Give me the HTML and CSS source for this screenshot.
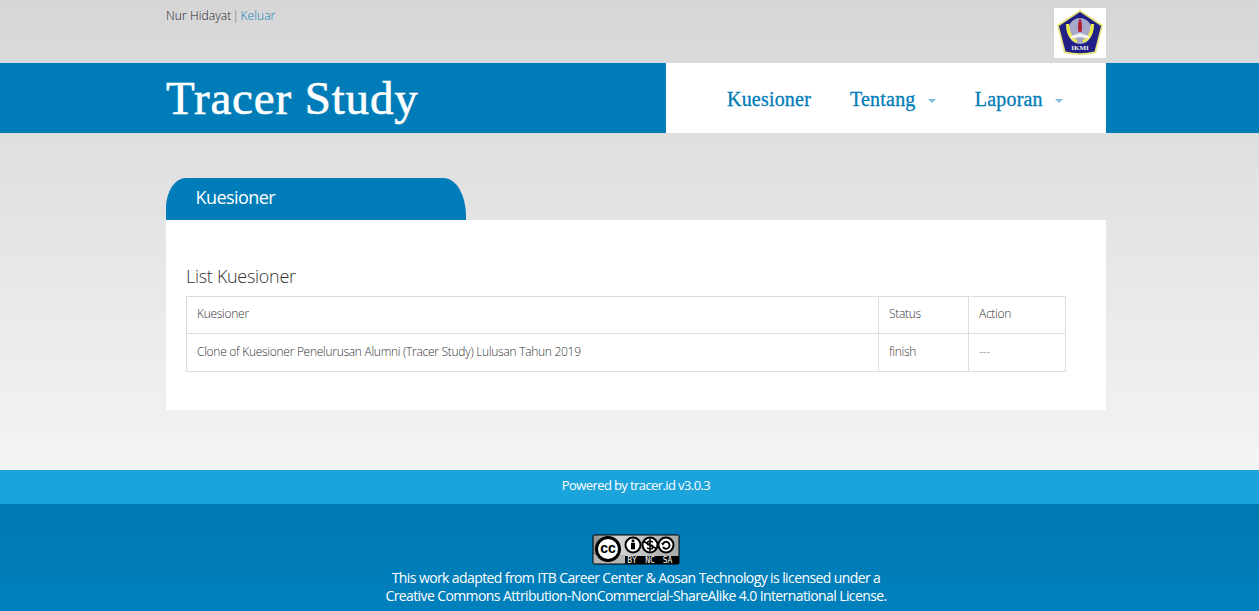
FILE: index.html
```html
<!DOCTYPE html>
<html lang="id">

<head>
  <meta charset="UTF-8" />
  <meta name="viewport" content="width=device-width, initial-scale=1.0" />
  <title>Tracer Study</title>
  <link rel="stylesheet" href="styles.css">
</head>

<body>
  <div class="top">
    <div class="wrap top-inner">
      <div class="user">Nur Hidayat <span class="sep">|</span> <a href="#">Keluar</a></div>
      <div class="logo">
        <svg width="50" height="48" viewBox="0 0 50 48">
          <path d="M25 1 L48 16 L41 44 Q25 48 9 44 L2 16 Z" fill="#e6e27a" />
          <path d="M25 3 L46 17 L39.500 42.500 Q25 46 10.500 42.500 L4 17 Z" fill="#1f1f86" />
          <ellipse cx="25" cy="22" rx="12" ry="13" fill="#a6a8cc" />
          <path d="M11 15 Q11 30 22 34 L22 31 Q15 27 14 15 Z M39 15 Q39 30 28 34 L28 31 Q35 27 36 15 Z" fill="#eceb4c" />
          <path d="M25 9 Q28 14 26.500 23 L23.500 23 Q22 14 25 9 Z" fill="#b3202e" />
          <path d="M16 27 L25 24 L34 27 L34 30 L25 28 L16 30 Z" fill="#f2f2f2" />
          <text x="25" y="41" class="logo-name">IKMI</text>
        </svg>
      </div>
    </div>
  </div>

  <div class="band">
    <div class="wrap band-inner">
      <div class="brand">Tracer Study</div>
      <nav class="nav">
        <a href="#">Kuesioner</a>
        <a href="#">Tentang <span class="caret"></span></a>
        <a href="#">Laporan <span class="caret"></span></a>
      </nav>
    </div>
  </div>

  <div class="wrap content">
    <div class="tab">Kuesioner</div>
    <div class="panel">
      <h2>List Kuesioner</h2>
      <table>
        <tr class="head">
          <td class="c1">Kuesioner</td>
          <td class="c2">Status</td>
          <td class="c3">Action</td>
        </tr>
        <tr class="row">
          <td>Clone of Kuesioner Penelurusan Alumni (Tracer Study) Lulusan Tahun 2019</td>
          <td>finish</td>
          <td class="none">---</td>
        </tr>
      </table>
    </div>
  </div>

  <div class="powered">Powered by tracer.id v3.0.3</div>

  <footer class="foot">
    <svg class="cc" width="88" height="31" viewBox="0 0 88 31">
      <defs>
        <linearGradient id="ccGrey" x1="0" x2="1" y1="0" y2="0">
          <stop offset="0" stop-color="#8f918f" />
          <stop offset="0.3" stop-color="#d2d4d2" />
          <stop offset="1" stop-color="#a8aaa8" />
        </linearGradient>
      </defs>
      <rect x="0.5" y="0.5" width="87" height="30" rx="2" fill="#000" />
      <rect x="1.5" y="1.5" width="85" height="20.500" fill="url(#ccGrey)" />
      <path d="M1.500 21 H33 V29.500 H1.500 Z" fill="#b4b6b4" />
      <circle cx="16" cy="15" r="11.500" fill="#fff" stroke="#000" stroke-width="3" />
      <text x="16" y="19" class="cc-mark">cc</text>
      <circle cx="41" cy="11" r="7.500" fill="#fff" stroke="#000" stroke-width="2" />
      <circle cx="41" cy="6.800" r="1.500" fill="#000" />
      <rect x="39" y="8.800" width="4" height="6.500" fill="#000" />
      <circle cx="58" cy="11" r="7.500" fill="#fff" stroke="#000" stroke-width="2" />
      <path d="M61 8 Q56 6 55 9 Q55 11 58 11 Q61 11 61 13.500 Q60 16 55 14 M58 4.500 V17.500 M51 7 L65 15" fill="none" stroke="#000" stroke-width="1.500" />
      <circle cx="74" cy="11" r="7.500" fill="#fff" stroke="#000" stroke-width="2" />
      <path d="M70.800 10 A3.500 3.500 0 1 1 71 13" fill="none" stroke="#000" stroke-width="1.800" />
      <path d="M69 9 L72.800 9 L70.800 11.800 Z" fill="#000" />
      <text x="40" y="28.700" class="cc-tag">BY</text>
      <text x="58" y="28.700" class="cc-tag">NC</text>
      <text x="75.500" y="28.700" class="cc-tag">SA</text>
    </svg>
    <p>This work adapted from ITB Career Center &amp; Aosan Technology is licensed under a<br>
      Creative Commons Attribution-NonCommercial-ShareAlike 4.0 International License.</p>
  </footer>
</body>

</html>
```

FILE: styles.css
```css
html,
body {
  margin: 0;
  padding: 0;
}

body {
  background: linear-gradient(#d6d6d6, #f4f4f4 470px);
  font-family: 'Open Sans', sans-serif;
  font-weight: 300;
  color: #333;
  overflow: hidden;
}

a {
  text-decoration: none;
}

.wrap {
  width: 940px;
  margin-left: 166px;
}

.top {
  height: 63px;
}

.top-inner {
  display: flex;
  justify-content: space-between;
}

.user {
  font-size: 12px;
  letter-spacing: 0.1px;
  padding-top: 7px;
  line-height: 17px;
  color: #222;
}

.user a {
  color: #0b80b8;
}

.sep {
  color: #666;
  margin: 0 -2px;
}

.logo {
  width: 52px;
  height: 50px;
  margin-top: 8px;
  background: #fff;
  display: flex;
  align-items: center;
  justify-content: center;
}

.logo-name {
  font-family: 'Liberation Serif', serif;
  font-size: 7px;
  font-weight: 700;
  fill: #f2f2f2;
  text-anchor: middle;
}

.band {
  background: #007db8;
  height: 70px;
}

.band-inner {
  display: flex;
  height: 70px;
}

.brand {
  width: 500px;
  color: #fff;
  font-family: 'Liberation Serif', serif;
  font-size: 47px;
  line-height: 70px;
  letter-spacing: 0.85px;
  -webkit-text-stroke: 0.6px #fff;
}

.nav {
  width: 440px;
  background: #fff;
  display: flex;
  gap: 39px;
  padding-left: 61px;
  box-sizing: border-box;
}

.nav a {
  color: #007db8;
  font-family: 'Liberation Serif', serif;
  font-size: 20px;
  line-height: 73px;
  letter-spacing: 0.2px;
  -webkit-text-stroke: 0.3px #007db8;
}

.caret {
  display: inline-block;
  width: 0;
  height: 0;
  margin-left: 7px;
  vertical-align: middle;
  border-left: 4px solid transparent;
  border-right: 4px solid transparent;
  border-top: 4px solid #7fbedc;
}

.content {
  padding-top: 45px;
  height: 292px;
}

.tab {
  width: 270.5px;
  height: 42px;
  padding-left: 29.5px;
  background: #007db8;
  border-radius: 20px 22px 0 0 / 30px 38px 0 0;
  color: #fff;
  font-size: 18px;
  font-weight: 400;
  letter-spacing: -0.55px;
  line-height: 39px;
}

.panel {
  background: #fff;
  height: 190px;
  padding: 44px 20px 0;
  box-sizing: border-box;
}

h2 {
  margin: 0 0 8px;
  font-size: 18px;
  font-weight: 300;
  line-height: 24px;
  letter-spacing: -0.3px;
  color: #333;
}

table {
  width: 880px;
  border-collapse: collapse;
  table-layout: fixed;
  font-size: 12px;
  letter-spacing: -0.28px;
}

td {
  border: 1px solid #ddd;
  padding: 0 10px;
  box-sizing: border-box;
}

.head td {
  height: 37px;
  padding-bottom: 3px;
}

.row td {
  height: 38px;
  padding-bottom: 2px;
}

.c2 {
  width: 90px;
}

.c3 {
  width: 97px;
}

.none {
  color: #888;
}

.powered {
  background: #1ba3dc;
  height: 34px;
  line-height: 30px;
  text-align: center;
  color: #fff;
  font-size: 13px;
  font-weight: 400;
  letter-spacing: -0.6px;
  padding-left: 13px;
  box-sizing: border-box;
}

.foot {
  background: linear-gradient(#0079b2, #0080bc);
  height: 107px;
  padding-top: 30px;
  box-sizing: border-box;
  text-align: center;
  color: #fff;
}

.cc {
  display: block;
  margin: 0 auto 4px 592px;
}

.cc-mark {
  font-family: 'Liberation Sans', sans-serif;
  font-size: 14px;
  font-weight: 700;
  text-anchor: middle;
}

.cc-tag {
  font-family: 'DejaVu Sans Mono', monospace;
  font-size: 8px;
  fill: #fff;
  text-anchor: middle;
}

.foot p {
  margin: 0;
  font-size: 14px;
  font-weight: 400;
  line-height: 18px;
  letter-spacing: -0.6px;
  margin-left: 13px;
}
```
